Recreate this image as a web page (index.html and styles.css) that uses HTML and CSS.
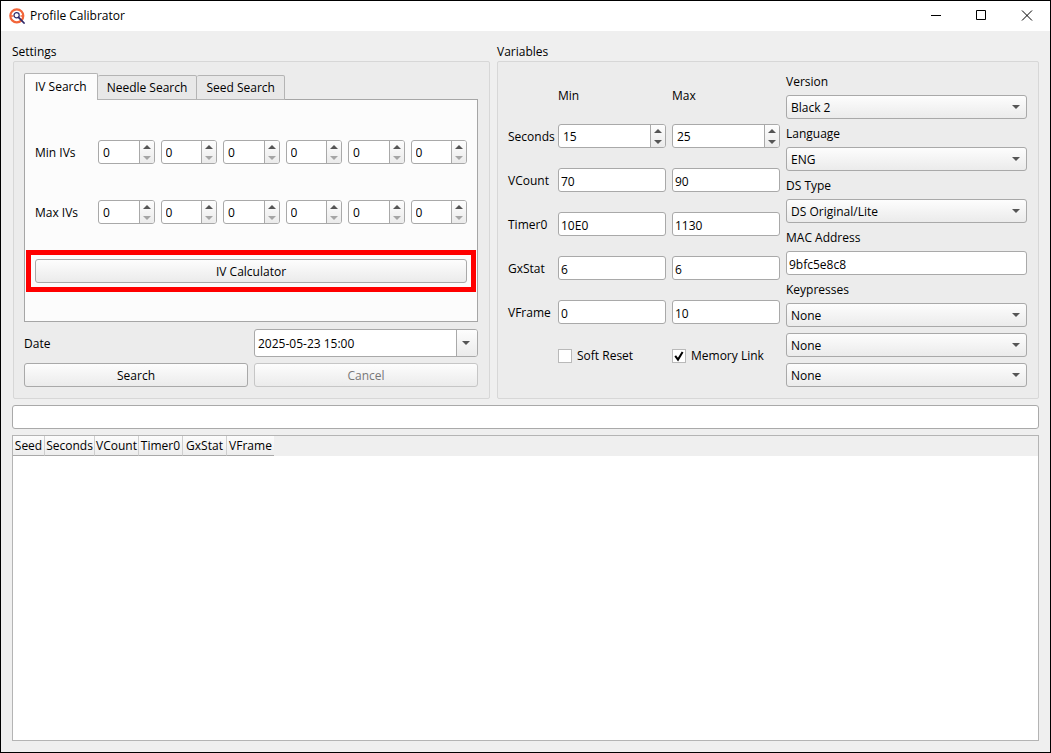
FILE: index.html
```html
<!DOCTYPE html>
<html lang="en">
<head>
<meta charset="utf-8">
<title>Profile Calibrator</title>
<link rel="stylesheet" href="styles.css">
</head>
<body>
<div class="window">

  <header class="titlebar">
    <svg class="logo" width="16" height="16" viewBox="0 0 16 16">
      <circle cx="7.8" cy="7.8" r="6.5" fill="#fff" stroke="#f2653a" stroke-width="2.2"/>
      <path d="M2 8h2.5M11.5 8h2.5" stroke="#f2653a" stroke-width="1.5"/>
      <circle cx="7.6" cy="7.2" r="2.6" fill="#fff" stroke="#2f2a6b" stroke-width="1.2"/>
      <path d="M9.6 9.4L15 15" stroke="#2f2a6b" stroke-width="1.8" stroke-linecap="round"/>
    </svg>
    <h1>Profile Calibrator</h1>
    <div class="winButtons">
      <button type="button" aria-label="Minimize"><svg width="12" height="12" viewBox="0 0 12 12"><path d="M2 5.5h10"/></svg></button>
      <button type="button" aria-label="Maximize"><svg width="12" height="12" viewBox="0 0 12 12"><path d="M1.5 .5h9v9h-9z"/></svg></button>
      <button type="button" aria-label="Close"><svg width="12" height="12" viewBox="0 0 12 12"><path d="M1 .5l10 10M11 .5L1 10.5"/></svg></button>
    </div>
  </header>

  <main>
    <div class="groups">

      <section class="settings">
        <h2>Settings</h2>
        <div class="groupBox">
          <div class="tabs" role="tablist">
            <button type="button" role="tab" class="tab active" aria-selected="true">IV Search</button>
            <button type="button" role="tab" class="tab" aria-selected="false">Needle Search</button>
            <button type="button" role="tab" class="tab" aria-selected="false">Seed Search</button>
          </div>
          <div class="tabPanel" role="tabpanel">
            <div class="ivRow">
              <span>Min IVs</span>
              <div class="spin atMin"><input type="text" value="0" aria-label="Min HP"><div class="arrows"><button type="button" class="up" aria-label="Up"></button><button type="button" class="down" aria-label="Down"></button></div></div>
              <div class="spin atMin"><input type="text" value="0" aria-label="Min Attack"><div class="arrows"><button type="button" class="up" aria-label="Up"></button><button type="button" class="down" aria-label="Down"></button></div></div>
              <div class="spin atMin"><input type="text" value="0" aria-label="Min Defense"><div class="arrows"><button type="button" class="up" aria-label="Up"></button><button type="button" class="down" aria-label="Down"></button></div></div>
              <div class="spin atMin"><input type="text" value="0" aria-label="Min Sp. Attack"><div class="arrows"><button type="button" class="up" aria-label="Up"></button><button type="button" class="down" aria-label="Down"></button></div></div>
              <div class="spin atMin"><input type="text" value="0" aria-label="Min Sp. Defense"><div class="arrows"><button type="button" class="up" aria-label="Up"></button><button type="button" class="down" aria-label="Down"></button></div></div>
              <div class="spin atMin"><input type="text" value="0" aria-label="Min Speed"><div class="arrows"><button type="button" class="up" aria-label="Up"></button><button type="button" class="down" aria-label="Down"></button></div></div>
            </div>
            <div class="ivRow">
              <span>Max IVs</span>
              <div class="spin atMin"><input type="text" value="0" aria-label="Max HP"><div class="arrows"><button type="button" class="up" aria-label="Up"></button><button type="button" class="down" aria-label="Down"></button></div></div>
              <div class="spin atMin"><input type="text" value="0" aria-label="Max Attack"><div class="arrows"><button type="button" class="up" aria-label="Up"></button><button type="button" class="down" aria-label="Down"></button></div></div>
              <div class="spin atMin"><input type="text" value="0" aria-label="Max Defense"><div class="arrows"><button type="button" class="up" aria-label="Up"></button><button type="button" class="down" aria-label="Down"></button></div></div>
              <div class="spin atMin"><input type="text" value="0" aria-label="Max Sp. Attack"><div class="arrows"><button type="button" class="up" aria-label="Up"></button><button type="button" class="down" aria-label="Down"></button></div></div>
              <div class="spin atMin"><input type="text" value="0" aria-label="Max Sp. Defense"><div class="arrows"><button type="button" class="up" aria-label="Up"></button><button type="button" class="down" aria-label="Down"></button></div></div>
              <div class="spin atMin"><input type="text" value="0" aria-label="Max Speed"><div class="arrows"><button type="button" class="up" aria-label="Up"></button><button type="button" class="down" aria-label="Down"></button></div></div>
            </div>
            <div class="highlight"><button type="button" class="btn">IV Calculator</button></div>
          </div>
          <div class="searchForm">
            <label for="date">Date</label>
            <div class="dateEdit"><input type="text" id="date" value="2025-05-23 15:00"><button type="button" aria-label="Open calendar"></button></div>
            <button type="button" class="btn">Search</button>
            <button type="button" class="btn" disabled>Cancel</button>
          </div>
        </div>
      </section>

      <section class="variables">
        <h2>Variables</h2>
        <div class="groupBox">
          <div class="ranges">
            <span></span><span class="colHead">Min</span><span class="colHead">Max</span>

            <label for="secMin">Seconds</label>
            <div class="spin"><input type="text" id="secMin" value="15"><div class="arrows"><button type="button" class="up" aria-label="Up"></button><button type="button" class="down" aria-label="Down"></button></div></div>
            <div class="spin"><input type="text" value="25" aria-label="Seconds max"><div class="arrows"><button type="button" class="up" aria-label="Up"></button><button type="button" class="down" aria-label="Down"></button></div></div>

            <label for="vcountMin">VCount</label>
            <input type="text" class="lineEdit" id="vcountMin" value="70">
            <input type="text" class="lineEdit" value="90" aria-label="VCount max">

            <label for="timerMin">Timer0</label>
            <input type="text" class="lineEdit" id="timerMin" value="10E0">
            <input type="text" class="lineEdit" value="1130" aria-label="Timer0 max">

            <label for="gxMin">GxStat</label>
            <input type="text" class="lineEdit" id="gxMin" value="6">
            <input type="text" class="lineEdit" value="6" aria-label="GxStat max">

            <label for="vframeMin">VFrame</label>
            <input type="text" class="lineEdit" id="vframeMin" value="0">
            <input type="text" class="lineEdit" value="10" aria-label="VFrame max">

            <span></span>
            <label class="check"><span class="box"><input type="checkbox"><svg width="12" height="12" viewBox="0 0 12 12"><path d="M2.2 5.8L5 9.6 9.6 2"/></svg></span>Soft Reset</label>
            <label class="check"><span class="box"><input type="checkbox" checked><svg width="12" height="12" viewBox="0 0 12 12"><path d="M2.2 5.8L5 9.6 9.6 2"/></svg></span>Memory Link</label>
          </div>

          <div class="profile">
            <label for="version">Version</label>
            <div class="combo"><select id="version"><option>Black 2</option></select></div>
            <label for="language">Language</label>
            <div class="combo"><select id="language"><option>ENG</option></select></div>
            <label for="dsType">DS Type</label>
            <div class="combo"><select id="dsType"><option>DS Original/Lite</option></select></div>
            <label for="mac">MAC Address</label>
            <input type="text" class="lineEdit" id="mac" value="9bfc5e8c8">
            <label for="key1">Keypresses</label>
            <div class="combo"><select id="key1"><option>None</option></select></div>
            <div class="combo"><select aria-label="Keypress 2"><option>None</option></select></div>
            <div class="combo"><select aria-label="Keypress 3"><option>None</option></select></div>
          </div>
        </div>
      </section>
    </div>

    <div class="progress" role="progressbar" aria-label="Search progress"></div>

    <div class="results">
      <table>
        <thead>
          <tr><th class="c1">Seed</th><th class="c2">Seconds</th><th class="c3">VCount</th><th class="c3">Timer0</th><th class="c3">GxStat</th><th class="c4">VFrame</th></tr>
        </thead>
      </table>
    </div>
  </main>

</div>
</body>
</html>
```
FILE: styles.css
```css
* {
  box-sizing: border-box;
}

body {
  margin: 0;
  font-family: "Open Sans", "Noto Sans", sans-serif;
  font-size: 12px;
  line-height: 18px;
  color: #000;
}

h1, h2 {
  margin: 0;
  font-size: 12px;
  font-weight: normal;
}

button, input, select {
  font: inherit;
  color: inherit;
  margin: 0;
  padding: 0;
  border: 0;
  background: none;
  min-width: 0;
}

.window {
  display: flex;
  flex-direction: column;
  min-height: 100vh;
  border: 1px solid #000;
  background: #efefef;
}

/* title bar */
.titlebar {
  display: flex;
  align-items: center;
  height: 30px;
  padding-left: 8px;
  background: #fff;
}

.logo {
  margin-right: 5px;
}

.winButtons {
  display: flex;
  margin-left: auto;
}

.winButtons button {
  display: flex;
  align-items: center;
  justify-content: center;
  width: 46px;
  height: 30px;
}

.winButtons path {
  fill: none;
  stroke: #000;
}

main {
  display: flex;
  flex-direction: column;
  flex: 1;
  gap: 6px;
  padding: 12px 11px 11px;
}

/* group boxes */
.groups {
  display: flex;
  gap: 7px;
}

.settings {
  flex: 478;
  display: flex;
  flex-direction: column;
}

.variables {
  flex: 542;
  display: flex;
  flex-direction: column;
}

.groupBox {
  flex: 1;
  padding: 11px;
  border: 1px solid #d7d7d7;
  border-radius: 2px;
  background: #ececec;
}

.settings .groupBox {
  margin-left: 1px;
  padding: 11px 11px 11px 10px;
}

.variables .groupBox {
  display: grid;
  grid-template-columns: 272fr 241fr;
  gap: 6px;
  padding-left: 10px;
}

/* tabs */
.tabs {
  display: flex;
  align-items: flex-end;
  height: 27px;
}

.tab {
  height: 25px;
  padding: 1px 9px 0;
  border: 1px solid #b4b4b4;
  border-left: 0;
  border-radius: 2px 2px 0 0;
  background: #e8e8e8;
}

.tab.active {
  position: relative;
  height: 27px;
  padding: 0 10px;
  border-left: 1px solid #a6a6a6;
  border-bottom: 0;
  background: #fcfcfc;
}

.tabPanel {
  display: flex;
  flex-direction: column;
  height: 223px;
  margin-top: -1px;
  padding: 40px 10px 0;
  border: 1px solid #a6a6a6;
  background: #fcfcfc;
}

.ivRow {
  display: grid;
  grid-template-columns: 57px repeat(6, 1fr);
  gap: 6px;
  align-items: center;
  height: 24px;
  margin-bottom: 36px;
}

.ivRow span {
  padding-top: 2px;
}

/* spin boxes */
.spin, .dateEdit {
  display: flex;
  width: 100%;
  height: 24px;
  border: 1px solid #a9a9a9;
  border-radius: 3px;
  background: #fff;
  overflow: hidden;
}

.spin input, .dateEdit input {
  flex: 1;
  width: 0;
  padding-left: 4px;
}

.spin input {
  padding-top: 1px;
}

.arrows {
  display: flex;
  flex-direction: column;
  width: 15px;
  border-left: 1px solid #a9a9a9;
  background: linear-gradient(#fdfdfd, #ebebeb);
}

.arrows button {
  display: flex;
  flex: 1;
  justify-content: center;
  align-items: center;
}

.arrows button::before {
  content: "";
  border: 4px solid transparent;
}

.arrows .up::before {
  border-top: 0;
  border-bottom-color: #555;
}

.arrows .down::before {
  border-bottom: 0;
  border-top-color: #555;
}

.atMin .down::before {
  border-top-color: #a5a5a5;
}

/* push buttons */
.btn {
  height: 24px;
  padding-top: 2px;
  border: 1px solid #a9a9a9;
  border-radius: 3px;
  background: linear-gradient(#fdfdfd, #ebebeb);
}

.btn:disabled {
  border-color: #c6c6c6;
  color: #787878;
}

.highlight {
  display: flex;
  margin: -10px -9px 0;
  padding: 4px;
  border: 5px solid #f00;
}

.highlight .btn {
  flex: 1;
}

.searchForm {
  display: grid;
  grid-template-columns: 1fr 1fr;
  gap: 6px;
  align-items: center;
  margin-top: 7px;
}

.searchForm label {
  padding-top: 2px;
}

.dateEdit {
  height: 28px;
}

.dateEdit input {
  padding: 2px 0 0 3px;
}

.dateEdit button {
  display: flex;
  align-items: center;
  justify-content: center;
  width: 21px;
  padding-right: 2px;
  border-left: 1px solid #a9a9a9;
  background: linear-gradient(#fdfdfd, #ebebeb);
}

.dateEdit button::before,
.combo::after {
  content: "";
  border: 4px solid transparent;
  border-top-color: #555;
  border-bottom: 0;
}

/* variables */
.ranges {
  display: grid;
  grid-template-columns: 44px 1fr 1fr;
  grid-template-rows: 41px;
  grid-auto-rows: 44px;
  column-gap: 6px;
  align-items: center;
}

.ranges label {
  padding-top: 2px;
}

.ranges .colHead {
  padding-top: 4px;
}

.lineEdit {
  width: 100%;
  height: 24px;
  padding: 2px 2px 0;
  border: 1px solid #a9a9a9;
  border-radius: 3px;
  background: #fff;
}

.ranges .check {
  display: flex;
  align-items: center;
  gap: 5px;
  padding-top: 0;
  white-space: nowrap;
}

.box {
  display: grid;
  width: 14px;
  height: 14px;
  border: 1px solid #b9b9b9;
  background: #fff;
}

.box input {
  grid-area: 1 / 1;
  appearance: none;
}

.box svg {
  grid-area: 1 / 1;
  visibility: hidden;
}

.box input:checked + svg {
  visibility: visible;
}

.box path {
  fill: none;
  stroke: #000;
  stroke-width: 2;
}

.profile {
  display: flex;
  flex-direction: column;
  gap: 6px;
}

.profile label {
  height: 16px;
}

.combo {
  position: relative;
  height: 24px;
}

.combo select {
  width: 100%;
  height: 24px;
  padding: 2px 24px 0 4px;
  border: 1px solid #a9a9a9;
  border-radius: 3px;
  background: linear-gradient(#fdfdfd, #ebebeb);
  appearance: none;
}

.combo::after {
  position: absolute;
  top: 10px;
  right: 7px;
  pointer-events: none;
}

.progress {
  height: 24px;
  border: 1px solid #a9a9a9;
  border-radius: 3px;
  background: #fff;
}

/* results table */
.results {
  flex: 1;
  border: 1px solid #b4b4b4;
  background: linear-gradient(#efefef, #efefef) top / 100% 20px no-repeat #fff;
}

table {
  border-collapse: separate;
  border-spacing: 0;
  table-layout: fixed;
  width: 261px;
}

th {
  height: 20px;
  padding: 1px 0 0;
  border-right: 1px solid #cfcfcf;
  border-bottom: 1px solid #a9a9a9;
  background: linear-gradient(#fcfcfc, #ededed);
  font-weight: normal;
  text-align: center;
}

th:last-child {
  border-right: 0;
}

.c1 {
  width: 32px;
}

.c2 {
  width: 50px;
}

.c3 {
  width: 44px;
}

.c4 {
  width: 47px;
}
```
